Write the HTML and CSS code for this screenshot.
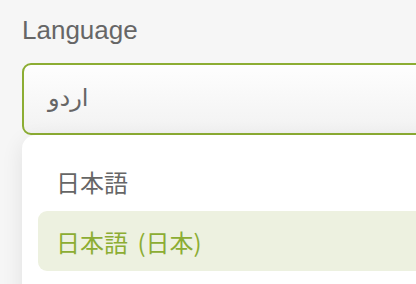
FILE: index.html
```html
<!DOCTYPE html>
<html lang="ja">
<head>
<meta charset="utf-8">
<title>Language</title>
<link rel="stylesheet" href="styles.css">
</head>
<body>
<div class="page">
  <div class="field">
    <label class="label">Language</label>
    <div class="select"><span class="value" lang="ur" dir="rtl">اردو</span></div>
    <ul class="menu">
      <li class="option">日本語</li>
      <li class="option active">日本語 (日本)</li>
    </ul>
  </div>
</div>
</body>
</html>
```

FILE: styles.css
```css
html, body {
  margin: 0;
  padding: 0;
  height: 100%;
  overflow: hidden;
}

body {
  background: #f6f6f6;
  font-family: "Liberation Sans", Arial, sans-serif;
}

.page {
  padding: 15px 0 0 22px;
}

.field {
  width: 620px;
  display: flex;
  flex-direction: column;
}

.label {
  display: block;
  font-size: 26px;
  line-height: 30px;
  color: #666666;
  margin-bottom: 18px;
}

.select {
  box-sizing: border-box;
  height: 72px;
  border: 2px solid #8cad33;
  border-radius: 9px;
  background: linear-gradient(#fefefe, #f2f2f2);
  display: flex;
  align-items: center;
  padding-left: 24px;
}

.value {
  font-family: "DejaVu Sans", "Noto Sans", sans-serif;
  font-size: 24px;
  color: #666666;
  line-height: 1;
  padding-bottom: 2px;
}

.menu {
  list-style: none;
  margin: 0;
  padding: 16px 0 30px 16px;
  background: #ffffff;
  border-radius: 14px 14px 0 0;
  box-shadow: 0 6px 22px rgba(0, 0, 0, 0.09);
}

.option {
  height: 60px;
  display: flex;
  align-items: center;
  padding-left: 18px;
  font-family: "Noto Sans CJK JP", "Noto Sans", sans-serif;
  font-size: 24px;
  word-spacing: 4px;
  color: #666666;
  border-radius: 9px;
}

.option.active {
  background: #edf1e0;
  color: #8cad33;
}
```
